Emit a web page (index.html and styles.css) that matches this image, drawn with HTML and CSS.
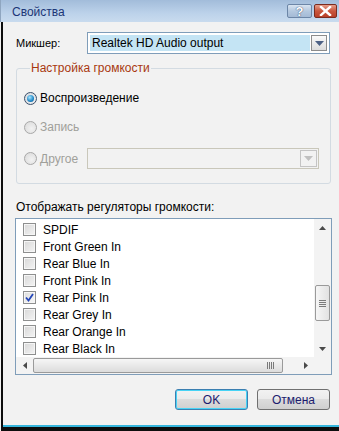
FILE: index.html
```html
<!DOCTYPE html>
<html lang="ru">
<head>
<meta charset="utf-8">
<title>Свойства</title>
<link rel="stylesheet" href="styles.css">
</head>
<body>
<div class="window">
  <div class="titlebar">
    <span class="title">Свойства</span>
    <div class="caption-buttons">
      <span class="cap-btn help">?</span>
      <span class="cap-btn close">
        <svg width="13" height="10" viewBox="0 0 13 10"><path d="M2 1 L11 9 M11 1 L2 9" stroke="#fff" stroke-width="2.4" stroke-linecap="square"/></svg>
      </span>
    </div>
  </div>
  <div class="client">
    <div class="mixer-row">
      <span class="mixer-label">Микшер:</span>
      <div class="combo active">
        <span class="combo-text">Realtek HD Audio output</span>
        <span class="combo-btn"><svg width="9" height="5" viewBox="0 0 9 5"><path d="M0 0 H9 L4.5 5 Z" fill="#4d6185"/></svg></span>
      </div>
    </div>

    <fieldset class="group">
      <legend>Настройка громкости</legend>
      <div class="radio-row r1">
        <span class="radio checked"><span class="dot"></span></span>
        <span>Воспроизведение</span>
      </div>
      <div class="radio-row r2 disabled">
        <span class="radio"></span>
        <span>Запись</span>
      </div>
      <div class="radio-row r3 disabled">
        <span class="radio"></span>
        <span class="other-label">Другое</span>
        <div class="combo disabled-combo">
          <span class="combo-text"></span>
          <span class="combo-btn"><svg width="9" height="5" viewBox="0 0 9 5"><path d="M0 0 H9 L4.5 5 Z" fill="#c0c0c0"/></svg></span>
        </div>
      </div>
    </fieldset>

    <div class="list-label">Отображать регуляторы громкости:</div>

    <div class="listbox">
      <div class="items">
        <div class="item"><span class="check"></span>SPDIF</div>
        <div class="item"><span class="check"></span>Front Green In</div>
        <div class="item"><span class="check"></span>Rear Blue In</div>
        <div class="item"><span class="check"></span>Front Pink In</div>
        <div class="item"><span class="check on"><svg width="9" height="9" viewBox="0 0 9 9"><path d="M1 4.5 L3.5 7.5 L8 1" fill="none" stroke="#2446b8" stroke-width="1.8"/></svg></span>Rear Pink In</div>
        <div class="item"><span class="check"></span>Rear Grey In</div>
        <div class="item"><span class="check"></span>Rear Orange In</div>
        <div class="item"><span class="check"></span>Rear Black In</div>
      </div>
      <div class="vscroll">
        <span class="arrow"><svg width="7" height="4" viewBox="0 0 7 4"><path d="M0 4 H7 L3.5 0 Z" fill="#4a4a4a"/></svg></span>
        <span class="vtrack top"></span>
        <span class="vthumb"><span class="grip-v"></span></span>
        <span class="vtrack bottom"></span>
        <span class="arrow"><svg width="7" height="4" viewBox="0 0 7 4"><path d="M0 0 H7 L3.5 4 Z" fill="#4a4a4a"/></svg></span>
      </div>
      <div class="hscroll">
        <span class="harrow"><svg width="4" height="7" viewBox="0 0 4 7"><path d="M4 0 V7 L0 3.5 Z" fill="#4a4a4a"/></svg></span>
        <span class="hthumb"><span class="grip-h"></span></span>
        <span class="htrack"></span>
        <span class="harrow"><svg width="4" height="7" viewBox="0 0 4 7"><path d="M0 0 V7 L4 3.5 Z" fill="#4a4a4a"/></svg></span>
      </div>
      <div class="corner"></div>
    </div>

    <div class="buttons">
      <button class="btn default">OK</button>
      <button class="btn">Отмена</button>
    </div>
  </div>
</div>
</body>
</html>
```

FILE: styles.css
```css
* { box-sizing: border-box; }
html, body { margin: 0; padding: 0; }
body {
  width: 339px;
  height: 431px;
  overflow: hidden;
  background: #f2f2f2;
  font-family: "Liberation Sans", Arial, sans-serif;
  font-size: 11px;
  color: #000;
}
.window {
  width: 339px;
  height: 431px;
  display: flex;
  flex-direction: column;
  background: #f2f2f2;
}
.titlebar {
  height: 22px;
  flex: 0 0 22px;
  background: linear-gradient(#a2bcda, #bcd2ea 60%, #c9dbee);
  border-left: 1px solid #8fa6c0;
  display: flex;
  align-items: center;
  justify-content: space-between;
  padding-left: 11px;
  padding-right: 2px;
}
.title {
  font-size: 12px;
  color: #1b3576;
  padding-top: 1px;
}
.caption-buttons {
  display: flex;
  gap: 2px;
  align-self: flex-start;
  margin-top: 4px;
}
.cap-btn {
  height: 14px;
  border-radius: 2px;
  display: flex;
  align-items: center;
  justify-content: center;
}
.help {
  width: 25px;
  background: linear-gradient(#d8e4f1, #b4c8df 50%, #a4bad5);
  border: 1px solid #6c86a7;
  color: #fff;
  font-weight: bold;
  font-size: 13px;
  text-shadow: 0 0 1px #3d5577, 0 0 1px #3d5577;
}
.close {
  width: 23px;
  background: linear-gradient(#e69e8a, #c9563d 50%, #b9412a);
  border: 1px solid #7a2c20;
}
.client {
  flex: 1;
  margin-left: 1px;
  border-left: 2px solid #0d0d0d;
  border-bottom: 4px solid #0d0d0d;
  box-shadow: inset 0 -2px 0 #35b6dd;
  padding: 10px 0 0 13px;
  display: flex;
  flex-direction: column;
}
.mixer-row {
  display: flex;
  align-items: center;
  height: 22px;
}
.mixer-label {
  width: 71px;
}
.combo {
  width: 243px;
  height: 22px;
  border: 1px solid #7f9db9;
  display: flex;
  align-items: center;
  padding: 2px;
  background: #fff;
}
.combo.active .combo-text {
  flex: 1;
  height: 16px;
  background: #c4e4f4;
  padding-left: 2px;
  font-size: 12px;
  line-height: 16px;
}
.combo-btn {
  width: 16px;
  height: 16px;
  margin-left: 1px;
  border: 1px solid #8c8c8c;
  background: linear-gradient(#fafafa, #dcdcdc);
  display: flex;
  align-items: center;
  justify-content: center;
}
.group {
  width: 315px;
  margin: 8px 0 0 0;
  padding: 0 8px 14px 7px;
  border: 1px solid #d3dbe2;
  border-radius: 3px;
}
.group legend {
  color: #a8380f;
  padding: 0 1px;
  margin-left: 6px;
  font-size: 12px;
  line-height: 13px;
}
.radio-row {
  display: flex;
  align-items: center;
  gap: 3px;
  height: 16px;
  font-size: 12px;
}
.radio-row.r1 { margin-top: 15px; }
.radio-row.r2 { margin-top: 13px; }
.radio-row.r3 { margin-top: 13px; height: 21px; }
.disabled { color: #a0a09a; }
.radio {
  width: 13px;
  height: 13px;
  border-radius: 50%;
  border: 1px solid #a8a8a8;
  background: radial-gradient(circle at 60% 60%, #f2f2f2, #d8d8d8);
  display: flex;
  align-items: center;
  justify-content: center;
}
.radio.checked {
  border-color: #3a4f6a;
  background: radial-gradient(circle at 60% 60%, #f6f6f6, #cfd4da);
}
.dot {
  width: 7px;
  height: 7px;
  border-radius: 50%;
  background: radial-gradient(circle at 40% 35%, #a8e6ff, #1d86c6 60%, #0c4c86);
}
.other-label { width: 44px; }
.disabled-combo {
  width: 232px;
  height: 21px;
  border-color: #c9c7ba;
  background: #f2f2f2;
  padding: 1px;
  justify-content: flex-end;
}
.disabled-combo .combo-btn {
  width: 17px;
  height: 17px;
  border-color: #c4c4c4;
  background: #f2f2f2;
}
.list-label {
  margin-top: 16px;
  font-size: 12px;
  line-height: 14px;
}
.listbox {
  margin: 4px 0 0 -1px;
  width: 317px;
  height: 157px;
  border: 1px solid #7f9db9;
  background: #fff;
  display: grid;
  grid-template-columns: 1fr 17px;
  grid-template-rows: 1fr 17px;
}
.items {
  padding: 2px 0 0 7px;
  overflow: hidden;
}
.item {
  display: flex;
  align-items: center;
  height: 17px;
  font-size: 12px;
}
.check {
  width: 13px;
  height: 13px;
  border: 1px solid #8e8f8f;
  background: linear-gradient(135deg, #d8d8d8, #f4f4f4);
  box-shadow: inset 0 0 0 1px #f6f6f6;
  margin-right: 7px;
  display: flex;
  align-items: center;
  justify-content: center;
}
.check.on { background: linear-gradient(135deg, #dcdcdc, #f8f8f8); }
.vscroll {
  background: #f3f3f3;
  display: flex;
  flex-direction: column;
  align-items: center;
}
.arrow {
  height: 17px;
  width: 17px;
  display: flex;
  align-items: center;
  justify-content: center;
}
.vtrack.top { height: 49px; }
.vtrack.bottom { flex: 1; }
.vthumb {
  width: 15px;
  height: 36px;
  border: 1px solid #9a9a9a;
  border-radius: 2px;
  background: linear-gradient(90deg, #f6f6f6, #e2e2e2);
  display: flex;
  align-items: center;
  justify-content: center;
}
.grip-v {
  width: 7px;
  height: 7px;
  background: repeating-linear-gradient(#7a7a7a 0 1px, transparent 1px 2px);
}
.hscroll {
  background: #f3f3f3;
  display: flex;
  align-items: center;
}
.harrow {
  width: 17px;
  height: 17px;
  display: flex;
  align-items: center;
  justify-content: center;
}
.hthumb {
  width: 250px;
  height: 15px;
  border: 1px solid #9a9a9a;
  border-radius: 2px;
  background: linear-gradient(#f6f6f6, #dcdcdc);
  display: flex;
  align-items: center;
  justify-content: flex-end;
  padding-right: 8px;
}
.grip-h {
  width: 7px;
  height: 7px;
  background: repeating-linear-gradient(90deg, #7a7a7a 0 1px, transparent 1px 2px);
}
.htrack { flex: 1; }
.corner { background: #f3f3f3; }
.buttons {
  display: flex;
  justify-content: flex-end;
  gap: 9px;
  margin-top: 14px;
  width: 314px;
}
.btn {
  width: 73px;
  height: 21px;
  font-family: "Liberation Sans", Arial, sans-serif;
  font-size: 12px;
  color: #1b1b6e;
  border: 1px solid #707070;
  border-radius: 3px;
  background: linear-gradient(#f2f2f2, #ebebeb 45%, #dcdcdc 50%, #cfcfcf);
  padding: 0;
}
.btn.default {
  border-color: #3c7fb1;
  box-shadow: inset 0 0 0 1px #48d3f5;
}
```
